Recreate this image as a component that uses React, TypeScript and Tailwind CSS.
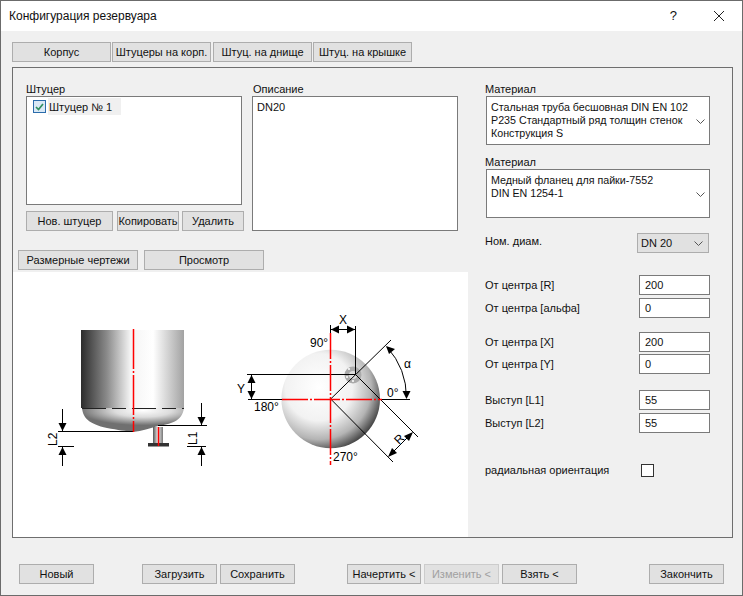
import type { ReactNode } from 'react'

function Btn({ className = '', children }: { className?: string; children: ReactNode }) {
  return (
    <div className={`flex h-[20px] shrink-0 items-center justify-center border border-[#adadad] bg-[#e1e1e1] whitespace-nowrap ${className}`}>
      {children}
    </div>
  )
}

function Chevron({ className = '' }: { className?: string }) {
  return (
    <svg width="9" height="5" viewBox="0 0 9 5" className={className}>
      <path d="M0.5 0.5 L4.5 4.5 L8.5 0.5" fill="none" stroke="#555" strokeWidth="1" />
    </svg>
  )
}

function Field({ label, value, className = '' }: { label: string; value: string; className?: string }) {
  return (
    <div className={`flex h-[20px] items-center justify-between pr-[22px] ${className}`}>
      <span>{label}</span>
      <div className="flex h-[20px] w-[71px] items-center border border-[#7a7a7a] bg-white pl-[5px]">{value}</div>
    </div>
  )
}

function MaterialBox({ lines, chevronTop }: { lines: string[]; chevronTop: string }) {
  return (
    <div className="relative ml-[1px] h-[49px] w-[224px] border border-[#7a7a7a] bg-white pt-[4px] pl-[4px] text-[10.7px] leading-[13px]">
      {lines.map((l) => (
        <div key={l} className="whitespace-nowrap">{l}</div>
      ))}
      <Chevron className={`absolute right-[4px] ${chevronTop}`} />
    </div>
  )
}

function Arrow({ x, y, dir }: { x: number; y: number; dir: 'up' | 'down' | 'left' | 'right' }) {
  const p =
    dir === 'down'
      ? `${x},${y} ${x - 4},${y - 8} ${x + 4},${y - 8}`
      : dir === 'up'
        ? `${x},${y} ${x - 4},${y + 8} ${x + 4},${y + 8}`
        : dir === 'left'
          ? `${x},${y} ${x + 8},${y - 4} ${x + 8},${y + 4}`
          : `${x},${y} ${x - 8},${y - 4} ${x - 8},${y + 4}`
  return <polygon points={p} fill="#000" />
}

function Drawings() {
  return (
    <svg width="455" height="263" viewBox="13 272 455 263" className="block" fontFamily="'Liberation Sans', sans-serif">
      <defs>
        <linearGradient id="cyl" x1="0" x2="1" y1="0" y2="0">
          <stop offset="0" stopColor="#2c2c2c" />
          <stop offset="0.25" stopColor="#8a8a8a" />
          <stop offset="0.48" stopColor="#f4f4f4" />
          <stop offset="0.7" stopColor="#ffffff" />
          <stop offset="1" stopColor="#a2a2a2" />
        </linearGradient>
        <radialGradient id="head" cx="0.6" cy="0.1" r="0.62">
          <stop offset="0" stopColor="#ffffff" />
          <stop offset="0.45" stopColor="#dcdcdc" />
          <stop offset="1" stopColor="#707070" />
        </radialGradient>
        <linearGradient id="noz" x1="0" x2="1" y1="0" y2="0">
          <stop offset="0" stopColor="#555" />
          <stop offset="0.5" stopColor="#eee" />
          <stop offset="1" stopColor="#777" />
        </linearGradient>
        <radialGradient id="ball" cx="0.38" cy="0.38" r="0.68">
          <stop offset="0" stopColor="#ffffff" />
          <stop offset="0.5" stopColor="#f2f2f2" />
          <stop offset="0.78" stopColor="#b4b4b4" />
          <stop offset="1" stopColor="#383838" />
        </radialGradient>
      </defs>

      {/* side view */}
      <rect x="81" y="330" width="103" height="78" fill="url(#cyl)" />
      <path d="M82 408 C83 418 89 424 107 428 C118 430 126 431 133 432 C142 431 150 428 158 426 C170 424 182 422 184 408 Z" fill="url(#head)" />
      <rect x="153" y="427" width="10" height="16" fill="url(#noz)" />
      <rect x="148" y="443" width="21" height="3.5" fill="#333" />
      <path d="M158.5 427 V446" stroke="#ff0000" strokeWidth="1.5" />
      <path d="M82 408.5 H184" stroke="#222" strokeWidth="1" strokeDasharray="24 6 14 6" />
      <g stroke="#000" strokeWidth="1" fill="none">
        <path d="M158 425.5 H207 M187 446.5 H206 M201.5 403 V425 M201.5 446 V466" />
        <path d="M58 431.5 H133 M58 446.5 H74 M62.5 409 V431 M62.5 446 V466" />
      </g>
      <path d="M133.5 329 V432" stroke="#ff0000" strokeWidth="1.5" strokeDasharray="40 2 2 2" />
      <Arrow x={201.5} y={425} dir="down" />
      <Arrow x={201.5} y={447} dir="up" />
      <Arrow x={62.5} y={431} dir="down" />
      <Arrow x={62.5} y={447} dir="up" />
      <text transform="translate(57 446) rotate(-90)" fontSize="12" fill="#000">L2</text>
      <text transform="translate(197 445) rotate(-90)" fontSize="12" fill="#000">L1</text>

      {/* top view */}
      <circle cx="330.7" cy="399" r="49.3" fill="url(#ball)" />
      <circle cx="353" cy="375" r="8.5" fill="#aaa" />
      <circle cx="353" cy="375" r="4" fill="#ddd" />
      <g fill="#fff">
        <circle cx="349" cy="369" r="1" />
        <circle cx="347" cy="377" r="1" />
        <circle cx="353" cy="381" r="1" />
      </g>
      <g stroke="#000" strokeWidth="1" fill="none">
        <path d="M330.5 325 V333 M355.5 326 V375" />
        <path d="M247 374.5 H355 M248 399.5 H282 M382 399.5 H410" />
        <path d="M330.7 399 L391 340 M330.7 399 L393 462 M355 374 L418 437" />
        <path d="M331 329.5 H355 M251.5 375 V399 M389 456 L412 433" />
        <path d="M387 347 A76 76 0 0 1 406.5 398" />
      </g>
      <path d="M330.5 333 V465" stroke="#ff0000" strokeWidth="1.5" strokeDasharray="26 2 2 2" />
      <path d="M282 399.5 H382" stroke="#ff0000" strokeWidth="1.5" strokeDasharray="26 2 2 2" />
      <Arrow x={331} y={329.5} dir="left" />
      <Arrow x={355} y={329.5} dir="right" />
      <Arrow x={251.5} y={375} dir="up" />
      <Arrow x={251.5} y={399} dir="down" />
      <Arrow x={406.5} y={399} dir="down" />
      <polygon points="386,346 395,349 389,354" fill="#000" />
      <polygon points="388,457 392,448 397,453" fill="#000" />
      <polygon points="413,432 409,441 404,436" fill="#000" />
      <g fontSize="12" fill="#000">
        <text x="339" y="324">X</text>
        <text x="237" y="393">Y</text>
        <text x="404" y="368">α</text>
        <text transform="translate(399 445) rotate(-45)">R</text>
        <text x="310" y="347">90°</text>
        <text x="254" y="411">180°</text>
        <text x="387" y="397">0°</text>
        <text x="333" y="461">270°</text>
      </g>
    </svg>
  )
}

export default function App() {
  return (
    <div className="h-[596px] w-[743px] overflow-hidden border border-[#6b6b6b] bg-[#f0f0f0] font-['Liberation_Sans',sans-serif] text-[11px] leading-[14px] text-[#111]">
      {/* Title bar */}
      <div className="flex h-[30px] items-center bg-white pl-[8px] text-[12px]">
        <span className="flex-1">Конфигурация резервуара</span>
        <span className="mr-[37px] text-[13px]">?</span>
        <svg width="10" height="10" viewBox="0 0 10 10" className="mr-[18px]">
          <path d="M0 0 L10 10 M10 0 L0 10" stroke="#222" strokeWidth="1" />
        </svg>
      </div>

      {/* Top tabs */}
      <div className="mt-[11px] ml-[11px] flex">
        <Btn className="w-[99px]">Корпус</Btn>
        <Btn className="ml-[1px] w-[99px]">Штуцеры на корп.</Btn>
        <Btn className="ml-[2px] w-[99px]">Штуц. на днище</Btn>
        <Btn className="ml-[1px] w-[99px]">Штуц. на крышке</Btn>
      </div>

      {/* Panel */}
      <div className="mt-[5px] ml-[11px] flex h-[471px] w-[721px] border border-[#6e6e6e]">
        <div className="flex w-[455px] shrink-0 flex-col">
          <div className="flex pt-[14px] pl-[13px]">
            <div className="w-[218px]">
              <div className="h-[14px]">Штуцер</div>
              <div className="h-[109px] w-[216px] border border-[#7a7a7a] bg-white pt-[1px] pl-[6px]">
                <div className="flex items-center">
                  <div className="flex h-[13px] w-[13px] items-center justify-center border border-[#2b6cab] bg-[#d9e8f6]">
                    <svg width="9" height="8" viewBox="0 0 9 8">
                      <path d="M1 4 L3.5 6.5 L8 1" fill="none" stroke="#2f8f5f" strokeWidth="1.7" />
                    </svg>
                  </div>
                  <div className="ml-[2px] flex h-[17px] w-[73px] items-center bg-[#f0f0f0] pl-[1px]">Штуцер № 1</div>
                </div>
              </div>
              <div className="mt-[6px] flex">
                <Btn className="w-[87px]">Нов. штуцер</Btn>
                <Btn className="ml-[4px] w-[62px]">Копировать</Btn>
                <Btn className="ml-[3px] w-[62px]">Удалить</Btn>
              </div>
            </div>
            <div className="ml-[8px]">
              <div className="h-[14px] pl-[1px]">Описание</div>
              <div className="h-[135px] w-[206px] border border-[#7a7a7a] bg-white pt-[3px] pl-[4px]">DN20</div>
            </div>
          </div>

          <div className="mt-[19px] ml-[5px] flex">
            <Btn className="w-[120px] bg-[#cce4f7]">Размерные чертежи</Btn>
            <Btn className="ml-[6px] w-[120px]">Просмотр</Btn>
          </div>

          <div className="mt-[2px] h-[265px] bg-white">
            <Drawings />
          </div>
        </div>

        <div className="flex-1 pt-[14px] pl-[17px]">
          <div className="h-[14px]">Материал</div>
          <MaterialBox
            lines={['Стальная труба бесшовная DIN EN 102', 'P235 Стандартный ряд толщин стенок', 'Конструкция S']}
            chevronTop="top-[22px]"
          />
          <div className="mt-[10px] h-[14px]">Материал</div>
          <MaterialBox lines={['Медный фланец для пайки-7552', 'DIN EN 1254-1']} chevronTop="top-[22px]" />

          <div className="mt-[15px] flex h-[20px] items-start justify-between pr-[23px]">
            <span className="pt-[1px]">Ном. диам.</span>
            <div className="flex h-[20px] w-[72px] items-center justify-between border border-[#adadad] bg-[#e1e1e1] pr-[5px] pl-[3px]">
              DN 20
              <Chevron />
            </div>
          </div>

          <Field label="От центра [R]" value="200" className="mt-[22px]" />
          <Field label="От центра [альфа]" value="0" className="mt-[3px]" />
          <Field label="От центра [X]" value="200" className="mt-[14px]" />
          <Field label="От центра [Y]" value="0" className="mt-[2px]" />
          <Field label="Выступ [L1]" value="55" className="mt-[16px]" />
          <Field label="Выступ [L2]" value="55" className="mt-[3px]" />

          <div className="mt-[30px] flex h-[14px] items-center">
            <span className="w-[156px]">радиальная ориентация</span>
            <div className="h-[13px] w-[13px] border border-[#333] bg-white" />
          </div>
        </div>
      </div>

      {/* Bottom buttons */}
      <div className="mt-[26px] ml-[18px] flex">
        <Btn className="w-[75px]">Новый</Btn>
        <Btn className="ml-[48px] w-[75px]">Загрузить</Btn>
        <Btn className="ml-[3px] w-[75px]">Сохранить</Btn>
        <Btn className="ml-[52px] w-[74px]">Начертить &lt;</Btn>
        <Btn className="ml-[3px] w-[75px] border-[#cccccc] text-[#a0a0a0]">Изменить &lt;</Btn>
        <Btn className="ml-[3px] w-[75px]">Взять &lt;</Btn>
        <Btn className="ml-[72px] w-[75px]">Закончить</Btn>
      </div>
    </div>
  )
}
